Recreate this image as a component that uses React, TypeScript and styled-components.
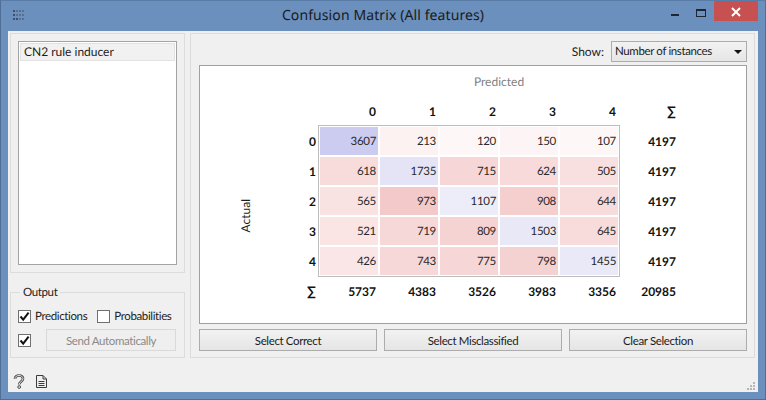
import React from 'react';
import styled, { createGlobalStyle } from 'styled-components';

const GlobalStyle = createGlobalStyle`
  html, body {
    margin: 0;
    padding: 0;
    width: 766px;
    height: 400px;
    overflow: hidden;
    background: #6b90bd;
  }
  * {
    box-sizing: border-box;
  }
`;

const Window = styled.div`
  display: flex;
  flex-direction: column;
  width: 766px;
  height: 400px;
  background: #6b90bd;
  border: 1px solid #4f6f96;
  border-top-color: #5a7da8;
  font-family: Lato, 'Noto Sans', sans-serif;
  font-size: 11.5px;
  letter-spacing: -0.37px;
  text-rendering: geometricPrecision;
  color: #1c1c1c;
`;

const TitleBar = styled.div`
  position: relative;
  display: flex;
  flex: 0 0 30px;
  align-items: center;
  justify-content: center;
`;

const Title = styled.div`
  font-family: 'Noto Sans', sans-serif;
  font-size: 14px;
  color: #1a1a1a;
  letter-spacing: 0.1px;
  margin-top: -1px;
`;

const AppGrip = styled.svg`
  position: absolute;
  left: 11px;
  top: 9px;
`;

const WindowButtons = styled.div`
  position: absolute;
  right: 7px;
  top: 0;
  display: flex;
  align-items: flex-start;
`;

const WindowButton = styled.div<{ $close?: boolean }>`
  display: flex;
  align-items: center;
  justify-content: center;
  width: ${(p) => (p.$close ? '44px' : '26px')};
  height: 20px;
  background: ${(p) => (p.$close ? '#c75050' : 'transparent')};
`;

const Client = styled.div`
  display: flex;
  flex-direction: column;
  flex: 1;
  margin: 0 7px 7px;
  background: #f0f0f0;
`;

const Body = styled.div`
  display: flex;
  gap: 5px;
  padding: 2px 2px 0;
  height: 327px;
`;

const LeftColumn = styled.div`
  display: flex;
  flex-direction: column;
  flex: 0 0 175px;
  min-width: 0;
`;

const Box = styled.div`
  border: 1px solid #dcdcdc;
`;

const ListBox = styled(Box)`
  flex: 0 0 239px;
  padding: 7px;
`;

const List = styled.div`
  height: 224px;
  background: #fff;
  border: 1px solid #a3a3a3;
  padding: 1px;
`;

const ListItem = styled.div`
  height: 18px;
  line-height: 16px;
  padding-left: 3px;
  background: #f1f1f1;
  border: 1px solid #e2e2e2;
  font-size: 12px;
  letter-spacing: 0;
`;

const OutputBox = styled(Box)`
  position: relative;
  flex: 1;
  margin-top: 19px;
  padding: 16px 7px 0;
`;

const Legend = styled.div`
  position: absolute;
  left: 9px;
  top: -8px;
  padding: 0 3px;
  background: #f0f0f0;
  line-height: 15px;
`;

const CheckRow = styled.div`
  display: flex;
  align-items: center;
  height: 14px;
  gap: 10px;
`;

const CheckLabel = styled.label`
  display: flex;
  align-items: center;
  gap: 4px;
  white-space: nowrap;
`;

const CheckBox = styled.span`
  display: flex;
  align-items: center;
  justify-content: center;
  width: 13px;
  height: 13px;
  background: #fff;
  border: 1px solid #707070;
`;

const SendRow = styled.div`
  display: flex;
  align-items: center;
  gap: 15px;
  margin-top: 6px;
`;

const SendButton = styled.button`
  width: 130px;
  height: 22px;
  padding: 0;
  background: #efefef;
  border: 1px solid #d9d9d9;
  color: #8a8a8a;
  font: inherit;
  letter-spacing: inherit;
`;

const RightColumn = styled(Box)`
  display: flex;
  flex-direction: column;
  flex: 0 0 565px;
  padding: 7px 7px 0 8px;
`;

const ShowRow = styled.div`
  display: flex;
  align-items: center;
  justify-content: flex-end;
  gap: 7px;
  height: 21px;
  font-size: 12px;
  letter-spacing: 0;
`;

const Combo = styled.div`
  display: flex;
  align-items: center;
  justify-content: space-between;
  width: 136px;
  height: 21px;
  padding: 0 4px 0 3px;
  background: linear-gradient(#f2f2f2, #e6e6e6);
  border: 1px solid #acacac;
  font-size: 11.5px;
  letter-spacing: -0.37px;
`;

const ComboArrow = styled.span`
  width: 0;
  height: 0;
  border-left: 4px solid transparent;
  border-right: 4px solid transparent;
  border-top: 4px solid #111;
`;

const Canvas = styled.div`
  height: 259px;
  margin-top: 3px;
  padding: 1px 0 0 32px;
  background: #fff;
  border: 1px solid #a0a0a0;
`;

const Matrix = styled.div`
  display: grid;
  grid-template-columns: 26px repeat(7, 58px);
  grid-template-rows: repeat(8, 28px);
  gap: 2px;
  font-size: 12px;
  letter-spacing: 0;
`;

const Predicted = styled.div`
  grid-column: 3 / 9;
  grid-row: 1;
  align-self: center;
  text-align: center;
  color: #7f7f7f;
`;

const Actual = styled.div`
  grid-column: 1;
  grid-row: 3 / 9;
  align-self: center;
  justify-self: center;
  writing-mode: vertical-rl;
  transform: rotate(180deg);
`;

const Frame = styled.div`
  grid-column: 3 / 8;
  grid-row: 3 / 8;
  margin: -2px;
  border: 1px solid #bdbdbd;
`;

const Head = styled.div<{ $col: number; $row: number }>`
  grid-column: ${(p) => p.$col};
  grid-row: ${(p) => p.$row};
  display: flex;
  align-items: center;
  justify-content: flex-end;
  padding-right: 2px;
  font-weight: 700;
  color: #111;
`;

const SigmaHead = styled(Head)`
  font-size: 13px;
  line-height: 1;
`;

const Cell = styled.div<{ $col: number; $row: number; $tone: string }>`
  grid-column: ${(p) => p.$col};
  grid-row: ${(p) => p.$row};
  display: flex;
  align-items: center;
  justify-content: flex-end;
  padding-right: 2px;
  background: ${(p) => p.$tone};
  color: #2a2a2a;
  font-size: 11.5px;
  letter-spacing: -0.3px;
`;

const ButtonRow = styled.div`
  display: flex;
  gap: 7px;
  margin-top: 5px;
`;

const ActionButton = styled.button`
  flex: 1;
  height: 22px;
  padding: 0;
  background: linear-gradient(#f2f2f2, #e5e5e5);
  border: 1px solid #acacac;
  font: inherit;
  letter-spacing: inherit;
  color: #1c1c1c;
`;

const StatusBar = styled.div`
  position: relative;
  display: flex;
  flex: 1;
  align-items: center;
  gap: 11px;
  padding: 12px 0 0 5px;
`;

const SizeGrip = styled.svg`
  position: absolute;
  right: 2px;
  bottom: 1px;
`;

const values = [
  ['3607', '213', '120', '150', '107'],
  ['618', '1735', '715', '624', '505'],
  ['565', '973', '1107', '908', '644'],
  ['521', '719', '809', '1503', '645'],
  ['426', '743', '775', '798', '1455'],
];

const tones = [
  ['#ccccf0', '#fcf2f2', '#fef7f7', '#fdf5f5', '#fef7f7'],
  ['#f8dcdc', '#e4e4f6', '#f6d6d6', '#f8dada', '#f9e0e0'],
  ['#f9e2e2', '#f3c9c9', '#ededfa', '#f5cece', '#f8dcdc'],
  ['#fae4e4', '#f6d8d8', '#f6d3d3', '#e8e8f6', '#f8dcdc'],
  ['#fae6e6', '#f6d8d8', '#f6d6d6', '#f5d2d2', '#e9e9f8'],
];

const columnTotals = ['5737', '4383', '3526', '3983', '3356', '20985'];

const helpPath = 'M2 5 C2 2.6 3.8 1.5 6 1.5 C8.2 1.5 10 2.7 10 4.8 C10 7.4 6.2 7.6 6.2 10.5';

const Check = () => (
  <svg width='11' height='11' viewBox='0 0 11 11'>
    <path d='M1.5 5.5 L4.2 8.6 L9.6 1.6' fill='none' stroke='#111' strokeWidth='2' />
  </svg>
);

const Grip = () => (
  <AppGrip width='13' height='12' viewBox='0 0 13 12'>
    {[0, 1, 2].map((r) =>
      [0, 1, 2, 3].map((c) => (
        <rect
          key={`${r}-${c}`}
          x={c * 3 + 1}
          y={r * 4}
          width='2'
          height='2'
          fill={c === 0 || (r === 2 && c === 1) ? '#3d4f66' : '#5a6f8a'}
        />
      )),
    )}
  </AppGrip>
);

export default function App() {
  return (
    <>
      <GlobalStyle />
      <Window>
        <TitleBar>
          <Grip />
          <Title>Confusion Matrix (All features)</Title>
          <WindowButtons>
            <WindowButton>
              <svg width='9' height='12' viewBox='0 0 9 12'>
                <rect x='0' y='9' width='8' height='2' fill='#1d2733' />
              </svg>
            </WindowButton>
            <WindowButton>
              <svg width='11' height='12' viewBox='0 0 11 12'>
                <rect x='0.5' y='4.5' width='9' height='7' fill='none' stroke='#1d2733' />
                <rect x='0' y='4' width='10' height='2' fill='#1d2733' />
              </svg>
            </WindowButton>
            <WindowButton $close>
              <svg width='10' height='12' viewBox='0 0 10 12'>
                <path d='M1 3 L9 11 M9 3 L1 11' stroke='#fff' strokeWidth='2' />
              </svg>
            </WindowButton>
          </WindowButtons>
        </TitleBar>
        <Client>
          <Body>
            <LeftColumn>
              <ListBox>
                <List>
                  <ListItem>CN2 rule inducer</ListItem>
                </List>
              </ListBox>
              <OutputBox>
                <Legend>Output</Legend>
                <CheckRow>
                  <CheckLabel>
                    <CheckBox>
                      <Check />
                    </CheckBox>
                    Predictions
                  </CheckLabel>
                  <CheckLabel>
                    <CheckBox />
                    Probabilities
                  </CheckLabel>
                </CheckRow>
                <SendRow>
                  <CheckBox>
                    <Check />
                  </CheckBox>
                  <SendButton disabled>Send Automatically</SendButton>
                </SendRow>
              </OutputBox>
            </LeftColumn>
            <RightColumn>
              <ShowRow>
                Show:
                <Combo>
                  Number of instances
                  <ComboArrow />
                </Combo>
              </ShowRow>
              <Canvas>
                <Matrix>
                  <Predicted>Predicted</Predicted>
                  <Actual>Actual</Actual>
                  <Frame />
                  {['0', '1', '2', '3', '4'].map((label, i) => (
                    <Head key={label} $col={i + 3} $row={2}>
                      {label}
                    </Head>
                  ))}
                  <SigmaHead $col={8} $row={2}>
                    ∑
                  </SigmaHead>
                  {values.map((row, r) => (
                    <React.Fragment key={r}>
                      <Head $col={2} $row={r + 3}>
                        {r}
                      </Head>
                      {row.map((value, c) => (
                        <Cell key={c} $col={c + 3} $row={r + 3} $tone={tones[r][c]}>
                          {value}
                        </Cell>
                      ))}
                      <Head $col={8} $row={r + 3}>
                        4197
                      </Head>
                    </React.Fragment>
                  ))}
                  <SigmaHead $col={2} $row={8}>
                    ∑
                  </SigmaHead>
                  {columnTotals.map((total, i) => (
                    <Head key={total} $col={i + 3} $row={8}>
                      {total}
                    </Head>
                  ))}
                </Matrix>
              </Canvas>
              <ButtonRow>
                <ActionButton>Select Correct</ActionButton>
                <ActionButton>Select Misclassified</ActionButton>
                <ActionButton>Clear Selection</ActionButton>
              </ButtonRow>
            </RightColumn>
          </Body>
          <StatusBar>
            <svg width='12' height='15' viewBox='0 0 12 15'>
              <path d={helpPath} fill='none' stroke='#4d4d4d' strokeWidth='2.6' />
              <path d={helpPath} fill='none' stroke='#e4e4e4' strokeWidth='1' />
              <circle cx='6.2' cy='13' r='1.4' fill='#e4e4e4' stroke='#4d4d4d' />
            </svg>
            <svg width='11' height='13' viewBox='0 0 11 13'>
              <path
                d='M0.5 0.5 H7 L10.5 4 V12.5 H0.5 Z M7 0.5 V4 H10.5 M2.5 6.5 H8.5 M2.5 8.5 H8.5 M2.5 10.5 H8.5'
                fill='none'
                stroke='#3c3c3c'
              />
            </svg>
            <SizeGrip width='10' height='10' viewBox='0 0 10 10'>
              {[
                [7, 1],
                [4, 4],
                [7, 4],
                [1, 7],
                [4, 7],
                [7, 7],
              ].map(([x, y]) => (
                <rect key={`${x}-${y}`} x={x} y={y} width='2' height='2' fill='#b5b5b5' />
              ))}
            </SizeGrip>
          </StatusBar>
        </Client>
      </Window>
    </>
  );
}
